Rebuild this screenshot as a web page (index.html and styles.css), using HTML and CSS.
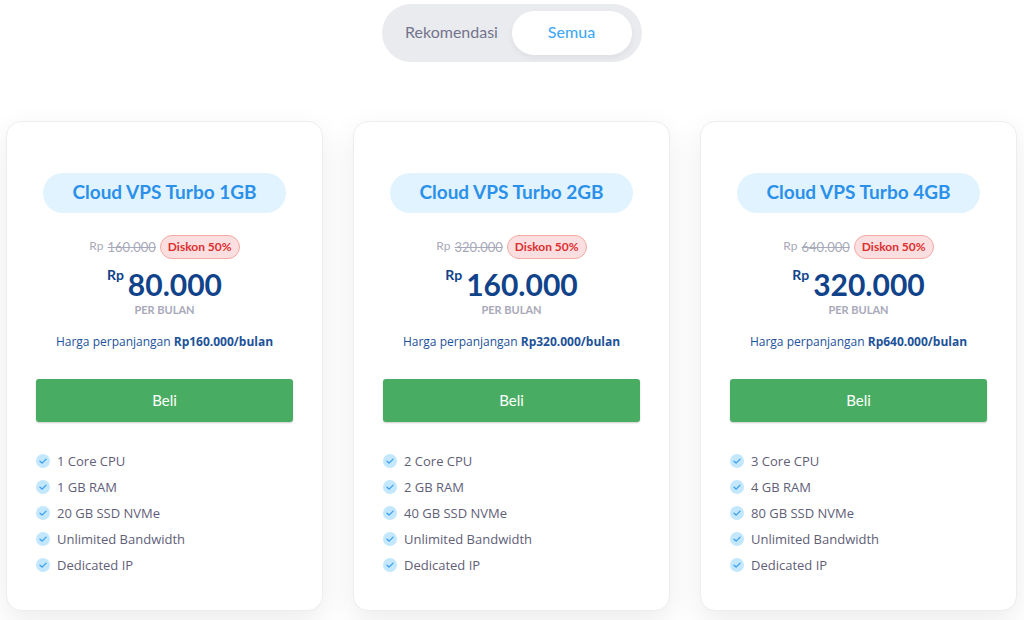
FILE: index.html
```html
<!DOCTYPE html>
<html lang="id">
<head>
    <meta charset="UTF-8">
    <meta name="viewport" content="width=device-width, initial-scale=1.0">
    <title>Cloud VPS Turbo</title>
    <link rel="stylesheet" href="styles.css">
</head>
<body>
    <svg class="sprite" aria-hidden="true">
        <symbol id="check" viewBox="0 0 14 14">
            <circle cx="7" cy="7" r="7" fill="#c3e7fc"/>
            <path d="M4 7.2 L6.1 9.1 L10.1 5.1" fill="none" stroke="#3d9ff0" stroke-width="1.3" stroke-linecap="round" stroke-linejoin="round"/>
        </symbol>
    </svg>

    <div class="toggle">
        <button type="button" class="toggle-btn">Rekomendasi</button>
        <button type="button" class="toggle-btn active">Semua</button>
    </div>

    <main class="plans">
        <section class="card">
            <h2 class="plan-name">Cloud VPS Turbo 1GB</h2>
            <div class="old-price">
                <span class="old-currency">Rp</span>
                <del>160.000</del>
                <span class="badge">Diskon 50%</span>
            </div>
            <div class="price"><span class="currency">Rp</span><span class="amount">80.000</span></div>
            <p class="period">PER BULAN</p>
            <p class="renewal">Harga perpanjangan <strong>Rp160.000/bulan</strong></p>
            <button type="button" class="buy">Beli</button>
            <ul class="features">
                <li><svg class="icon"><use href="#check"/></svg>1 Core CPU</li>
                <li><svg class="icon"><use href="#check"/></svg>1 GB RAM</li>
                <li><svg class="icon"><use href="#check"/></svg>20 GB SSD NVMe</li>
                <li><svg class="icon"><use href="#check"/></svg>Unlimited Bandwidth</li>
                <li><svg class="icon"><use href="#check"/></svg>Dedicated IP</li>
            </ul>
        </section>

        <section class="card">
            <h2 class="plan-name">Cloud VPS Turbo 2GB</h2>
            <div class="old-price">
                <span class="old-currency">Rp</span>
                <del>320.000</del>
                <span class="badge">Diskon 50%</span>
            </div>
            <div class="price"><span class="currency">Rp</span><span class="amount">160.000</span></div>
            <p class="period">PER BULAN</p>
            <p class="renewal">Harga perpanjangan <strong>Rp320.000/bulan</strong></p>
            <button type="button" class="buy">Beli</button>
            <ul class="features">
                <li><svg class="icon"><use href="#check"/></svg>2 Core CPU</li>
                <li><svg class="icon"><use href="#check"/></svg>2 GB RAM</li>
                <li><svg class="icon"><use href="#check"/></svg>40 GB SSD NVMe</li>
                <li><svg class="icon"><use href="#check"/></svg>Unlimited Bandwidth</li>
                <li><svg class="icon"><use href="#check"/></svg>Dedicated IP</li>
            </ul>
        </section>

        <section class="card">
            <h2 class="plan-name">Cloud VPS Turbo 4GB</h2>
            <div class="old-price">
                <span class="old-currency">Rp</span>
                <del>640.000</del>
                <span class="badge">Diskon 50%</span>
            </div>
            <div class="price"><span class="currency">Rp</span><span class="amount">320.000</span></div>
            <p class="period">PER BULAN</p>
            <p class="renewal">Harga perpanjangan <strong>Rp640.000/bulan</strong></p>
            <button type="button" class="buy">Beli</button>
            <ul class="features">
                <li><svg class="icon"><use href="#check"/></svg>3 Core CPU</li>
                <li><svg class="icon"><use href="#check"/></svg>4 GB RAM</li>
                <li><svg class="icon"><use href="#check"/></svg>80 GB SSD NVMe</li>
                <li><svg class="icon"><use href="#check"/></svg>Unlimited Bandwidth</li>
                <li><svg class="icon"><use href="#check"/></svg>Dedicated IP</li>
            </ul>
        </section>
    </main>
</body>
</html>
```
FILE: styles.css
```css
* {
    box-sizing: border-box;
}
body {
    font-family: Lato, "Open Sans", sans-serif;
    margin: 0;
    padding: 4px 7px 10px 6px;
    background-color: #fff;
    color: #5f6078;
}
button {
    font-family: inherit;
    border: none;
    cursor: pointer;
}
.sprite {
    display: none;
}

/* Plan filter */
.toggle {
    display: flex;
    width: fit-content;
    margin: 0 auto 59px;
    padding: 7px 10px;
    background-color: #eaebef;
    border-radius: 29px;
}
.toggle-btn {
    height: 44px;
    width: 120px;
    padding: 0 0 3px;
    font-size: 16px;
    color: #73748c;
    background: none;
    border-radius: 22px;
}
.toggle-btn.active {
    color: #3fa9f5;
    font-weight: 500;
    background-color: #fff;
    box-shadow: 0 3px 6px rgba(0, 0, 0, 0.05);
}

/* Cards */
.plans {
    display: grid;
    grid-template-columns: repeat(3, 1fr);
    gap: 30px;
}
.card {
    display: flex;
    flex-direction: column;
    align-items: center;
    padding: 51px 29px 32px;
    background-color: #fff;
    border: 1px solid #ededed;
    border-radius: 15px;
    box-shadow: 0 10px 30px rgba(0, 0, 0, 0.08);
}
.plan-name {
    margin: 0 0 22px;
    padding: 0 29px 2px;
    font-size: 19px;
    line-height: 38px;
    color: #2b90ea;
    background-color: #e1f3fe;
    border-radius: 20px;
    white-space: nowrap;
}
.old-price {
    display: flex;
    align-items: center;
    gap: 4px;
    height: 24px;
    font-size: 13px;
    color: #a8a9b9;
}
.old-currency {
    font-size: 12px;
    padding-bottom: 3px;
}
.badge {
    padding: 0 7px;
    font-size: 12px;
    font-weight: bold;
    line-height: 22px;
    color: #dc2f2f;
    background-color: #fbdfe0;
    border: 1px solid #f4aaa0;
    border-radius: 12px;
}
.price {
    display: flex;
    gap: 4px;
    margin-top: 7px;
    font-weight: bold;
    color: #11438a;
}
.currency {
    font-size: 14px;
    line-height: 18px;
}
.amount {
    font-size: 30px;
    line-height: 36px;
}
.period {
    margin: 0;
    font-size: 11px;
    font-weight: bold;
    line-height: 16px;
    color: #a8a9b9;
}
.renewal {
    margin: 15px 0 29px;
    font-family: "Open Sans", sans-serif;
    font-size: 12px;
    line-height: 17px;
    color: #1c5299;
    white-space: nowrap;
}
.buy {
    width: 100%;
    height: 43px;
    padding: 0 0 2px;
    font-size: 15px;
    color: #fff;
    background-color: #48ad62;
    border-radius: 3px;
    box-shadow: 0 1px 2px rgba(0, 0, 0, 0.2);
}
.features {
    align-self: stretch;
    list-style: none;
    margin: 26px 0 0;
    padding: 0;
    font-family: "Open Sans", sans-serif;
}
.features li {
    display: flex;
    align-items: center;
    gap: 7px;
    font-size: 13px;
    line-height: 26px;
}
.icon {
    width: 14px;
    height: 14px;
}
```
